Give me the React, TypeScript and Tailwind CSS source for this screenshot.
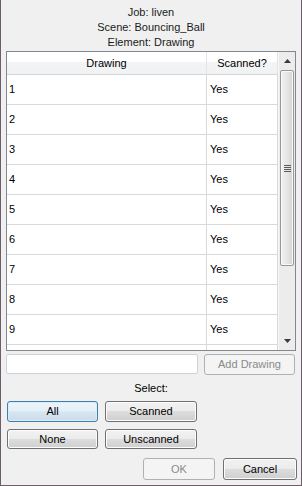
import React from "react";

const rows = [1, 2, 3, 4, 5, 6, 7, 8, 9];

function Btn({
  children,
  className = "",
  focused = false,
  disabled = false,
}: {
  children: React.ReactNode;
  className?: string;
  focused?: boolean;
  disabled?: boolean;
}) {
  let cls =
    "flex items-center justify-center rounded-[3px] border text-[11px] leading-none ";
  if (disabled) {
    cls += "border-[#adb2b5] bg-[#f4f4f4] text-[#8a8a8a] ";
  } else if (focused) {
    cls +=
      "border-[#3c7fb1] bg-[linear-gradient(#edf5fa_0%,#e4eff6_50%,#d8e7f1_50%,#cadcea_100%)] text-black shadow-[inset_0_0_0_1px_#dcecf7] ";
  } else {
    cls +=
      "border-[#707070] bg-[linear-gradient(#f2f2f2_0%,#ebebeb_50%,#dddddd_50%,#cfcfcf_100%)] text-black shadow-[inset_0_0_0_1px_#fcfcfc] ";
  }
  return <div className={cls + className}>{children}</div>;
}

export default function App() {
  return (
    <div
      className="w-[302px] h-[486px] bg-[#f0f0f0] border-l border-r border-b border-[#6d5c69] flex flex-col text-[11px] text-black"
      style={{ fontFamily: '"Liberation Sans", Arial, sans-serif' }}
    >
      <div className="pt-[5px] flex flex-col items-center leading-[15px] text-[#1a1a1a]">
        <div>Job: liven</div>
        <div>Scene: Bouncing_Ball</div>
        <div>Element: Drawing</div>
      </div>

      {/* Table */}
      <div className="ml-[5px] mt-[1px] w-[290px] h-[300px] border border-[#828790] bg-white flex overflow-hidden">
        <div className="flex-1 flex flex-col overflow-hidden">
          <div className="h-[23px] shrink-0 flex border-b border-[#d5d5d5] bg-[linear-gradient(#ffffff_0%,#ffffff_45%,#f3f4f6_45%,#f1f2f4_100%)]">
            <div className="w-[200px] flex items-center justify-center border-r border-[#e3e4e6]">
              Drawing
            </div>
            <div className="w-[71px] flex items-center justify-center border-r border-[#e3e4e6]">
              Scanned?
            </div>
          </div>
          {rows.map((r) => (
            <div
              key={r}
              className="h-[30px] shrink-0 flex border-b border-[#d9d9d9]"
            >
              <div className="w-[200px] flex items-center pl-[2px] border-r border-[#d9d9d9]">
                {r}
              </div>
              <div className="w-[71px] flex items-center pl-[3px] border-r border-[#d9d9d9]">
                Yes
              </div>
            </div>
          ))}
          <div className="h-[30px] shrink-0 flex">
            <div className="w-[200px] border-r border-[#d9d9d9]" />
            <div className="w-[71px] border-r border-[#d9d9d9]" />
          </div>
        </div>
        {/* Scrollbar */}
        <div className="w-[17px] shrink-0 flex flex-col bg-[#ececec] border-l border-[#f7f7f7]">
          <div className="h-[18px] flex items-center justify-center">
            <svg width="7" height="4" viewBox="0 0 7 4">
              <path d="M0 4 L3.5 0 L7 4 Z" fill="#3a3a3a" />
            </svg>
          </div>
          <div className="mx-[1px] h-[196px] rounded-[2px] border border-[#979797] bg-[linear-gradient(to_right,#f2f2f2,#e6e6e6_50%,#d4d4d4)] flex items-center justify-center shadow-[inset_0_0_0_1px_#f8f8f8]">
            <svg width="7" height="7" viewBox="0 0 7 7">
              <rect x="0" y="0" width="7" height="1" fill="#5a5a5a" />
              <rect x="0" y="2" width="7" height="1" fill="#5a5a5a" />
              <rect x="0" y="4" width="7" height="1" fill="#5a5a5a" />
              <rect x="0" y="6" width="7" height="1" fill="#5a5a5a" />
            </svg>
          </div>
          <div className="flex-1" />
          <div className="h-[18px] flex items-center justify-center">
            <svg width="7" height="4" viewBox="0 0 7 4">
              <path d="M0 0 L3.5 4 L7 0 Z" fill="#3a3a3a" />
            </svg>
          </div>
        </div>
      </div>

      {/* Input row */}
      <div className="mt-[3px] flex items-start">
        <div className="ml-[5px] w-[192px] h-[20px] rounded-[2px] border border-[#cfd3d8] bg-white" />
        <Btn disabled className="ml-[6px] w-[91px] h-[21px]">
          Add Drawing
        </Btn>
      </div>

      <div className="mt-[6px] leading-[15px] text-center">Select:</div>

      <div className="mt-[5px] flex">
        <Btn focused className="ml-[6px] w-[91px] h-[21px]">
          All
        </Btn>
        <Btn className="ml-[7px] w-[92px] h-[21px]">Scanned</Btn>
      </div>
      <div className="mt-[7px] flex">
        <Btn className="ml-[6px] w-[91px] h-[20px]">None</Btn>
        <Btn className="ml-[7px] w-[92px] h-[20px]">Unscanned</Btn>
      </div>

      <div className="mt-[9px] flex justify-end pr-[4px] gap-[8px]">
        <Btn disabled className="w-[72px] h-[22px]">
          OK
        </Btn>
        <Btn className="w-[74px] h-[22px]">Cancel</Btn>
      </div>
    </div>
  );
}
